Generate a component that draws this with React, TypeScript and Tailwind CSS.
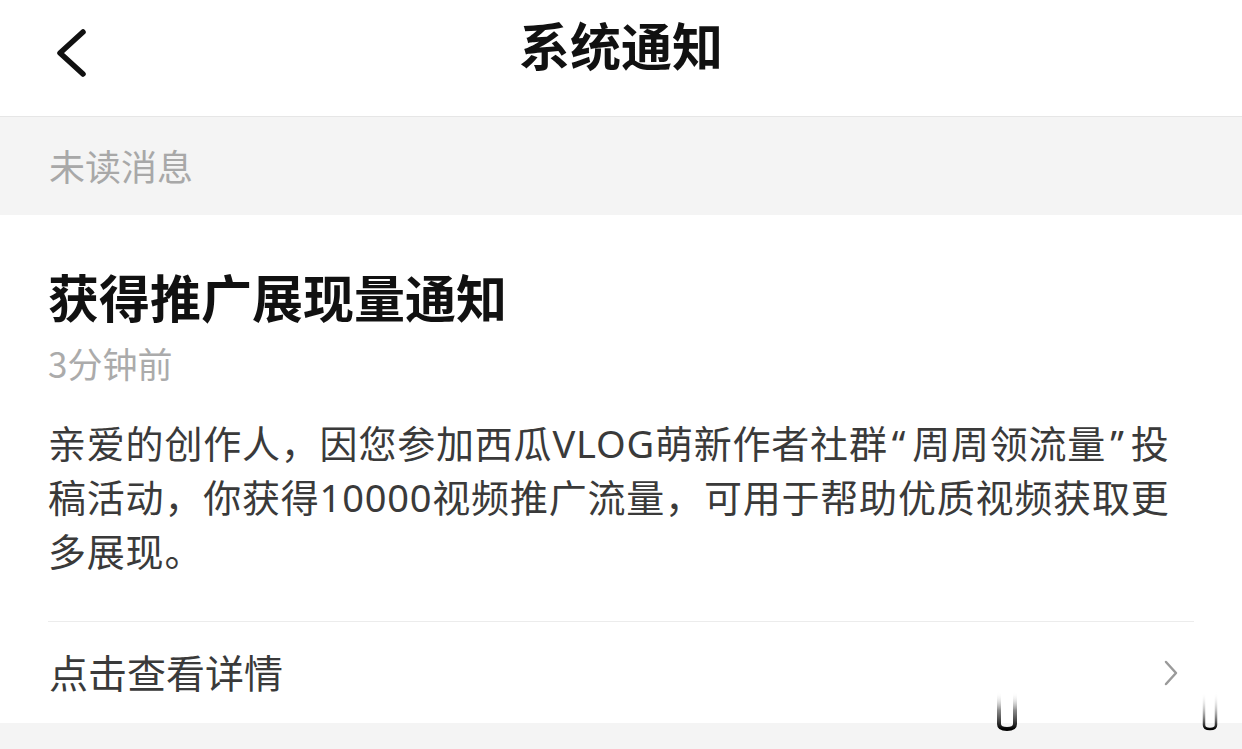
import React from "react";

const font = { fontFamily: '"Noto Sans CJK SC", "Noto Sans", sans-serif' };
const bodyFont = { fontFamily: '"Noto Sans", "Noto Sans CJK SC", sans-serif' };

function Marks() {
  return (
    <>
      <svg className="absolute left-[995px] top-[690px]" width="24" height="42" viewBox="0 0 24 42">
        <defs>
          <linearGradient id="g1" x1="0" y1="0" x2="0" y2="1">
            <stop offset="0" stopColor="#ffffff" stopOpacity="0" />
            <stop offset="0.5" stopColor="#555" stopOpacity="0.7" />
            <stop offset="1" stopColor="#000" />
          </linearGradient>
        </defs>
        <path d="M4 2 V34 Q4 39 12 39 Q20 39 20 34 V2" fill="none" stroke="url(#g1)" strokeWidth="4" />
      </svg>
      <svg className="absolute left-[1201px] top-[690px]" width="18" height="42" viewBox="0 0 18 42">
        <defs>
          <linearGradient id="g2" x1="0" y1="0" x2="0" y2="1">
            <stop offset="0" stopColor="#ffffff" stopOpacity="0" />
            <stop offset="0.6" stopColor="#666" stopOpacity="0.6" />
            <stop offset="1" stopColor="#000" />
          </linearGradient>
        </defs>
        <path d="M3 2 V35 Q3 39 9 39 Q15 39 15 35 V2" fill="none" stroke="url(#g2)" strokeWidth="2.5" />
      </svg>
    </>
  );
}

export default function App() {
  return (
    <div className="relative w-[1242px] h-[749px] overflow-hidden bg-[#f4f4f4]" style={font}>
      {/* Header */}
      <div className="relative h-[117px] bg-white border-b border-[#e6e6e6] flex items-center justify-center">
        <svg className="absolute left-[52px] top-[24px]" width="42" height="58" viewBox="0 0 42 58">
          <polyline points="31,8 8,29 31,50" fill="none" stroke="#111" strokeWidth="5.5" strokeLinecap="round" strokeLinejoin="round" />
        </svg>
        <div className="text-[51px] font-bold text-[#111] leading-none -mt-[28px]">系统通知</div>
      </div>

      {/* Section header */}
      <div className="h-[98px] flex items-center px-[49px]">
        <span className="text-[36px] text-[#a8a8a8] leading-none -mt-[3px]">未读消息</span>
      </div>

      {/* Card */}
      <div className="bg-white">
        <div className="px-[48px] pt-[51px]">
          <div className="text-[51px] font-bold text-[#111] leading-[60px]">获得推广展现量通知</div>
          <div className="mt-[17px] text-[35px] text-[#ababab] leading-[40px]">3分钟前</div>
          <div className="mt-[33px] text-[38px] text-[#3a3a3a] leading-[54px] whitespace-nowrap tracking-[0.8px]" style={bodyFont}>
            <div>
              亲爱的创作人，因您参加西瓜VLOG萌新作者社群<span className="pl-[4px] pr-[6px]">“</span>周周领流量<span className="pl-[4px] pr-[6px]">”</span>投
            </div>
            <div>稿活动，你获得10000视频推广流量，可用于帮助优质视频获取更</div>
            <div>多展现。</div>
          </div>
          <div className="mt-[43px] border-t border-[#ececec]" />
        </div>
        <div className="h-[101px] flex items-center justify-between pl-[49px] pr-[62px]">
          <span className="text-[39px] text-[#3a3a3a] leading-none -mt-[2px]">点击查看详情</span>
          <svg width="18" height="28" viewBox="0 0 18 28">
            <polyline points="4,3 14,14 4,25" fill="none" stroke="#9a9a9a" strokeWidth="2.5" strokeLinecap="round" strokeLinejoin="round" />
          </svg>
        </div>
      </div>

      <Marks />
    </div>
  );
}
